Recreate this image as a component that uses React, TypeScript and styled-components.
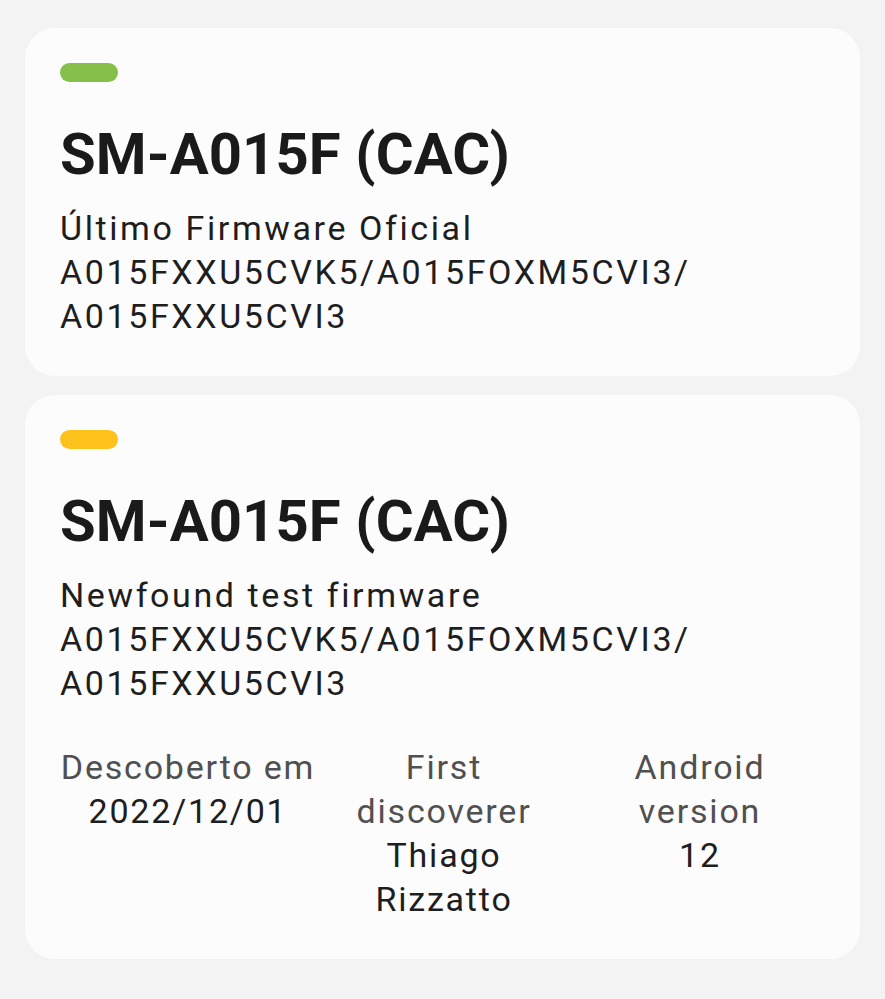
import React from 'react';
import styled, { createGlobalStyle } from 'styled-components';

const GlobalStyle = createGlobalStyle`
  html, body {
    margin: 0;
    padding: 0;
    background: #f3f3f3;
  }
  body {
    font-family: Roboto, "Noto Sans", sans-serif;
    color: #1c1c1c;
  }
`;

const Page = styled.div`
  display: flex;
  flex-direction: column;
  gap: 19px;
  padding: 28px 25px 39px 25px;
  box-sizing: border-box;
  width: 885px;
  min-height: 999px;
`;

const Card = styled.div`
  background: #fcfcfc;
  border-radius: 30px;
  padding: 35px 32px 38px 35px;
  display: flex;
  flex-direction: column;
`;

const Pill = styled.div<{ $color: string }>`
  width: 58px;
  height: 19px;
  border-radius: 10px;
  background: ${p => p.$color};
`;

const Title = styled.h2`
  margin: 38px 0 0 0;
  font-size: 58px;
  line-height: 68px;
  font-weight: 700;
  letter-spacing: 0.1px;
  color: #1a1a1a;
`;

const Body = styled.div`
  margin-top: 18px;
  font-size: 34px;
  line-height: 44px;
  letter-spacing: 2.6px;
  color: #1e1e1e;
`;

const Stats = styled.div`
  margin-top: 40px;
  display: grid;
  grid-template-columns: repeat(3, 256px);
`;

const Stat = styled.div`
  text-align: center;
  font-size: 34px;
  line-height: 44px;
  letter-spacing: 1.8px;
  white-space: nowrap;
`;

const StatLabel = styled.div`
  color: #505050;
`;

const StatValue = styled.div`
  color: #1e1e1e;
`;

export default function App() {
  return (
    <>
      <GlobalStyle />
      <Page>
        <Card>
          <Pill $color="#86c04a" />
          <Title>SM-A015F (CAC)</Title>
          <Body>
            Último Firmware Oficial<br />
            A015FXXU5CVK5/A015FOXM5CVI3/<br />
            A015FXXU5CVI3
          </Body>
        </Card>
        <Card>
          <Pill $color="#fcc21b" />
          <Title>SM-A015F (CAC)</Title>
          <Body>
            Newfound test firmware<br />
            A015FXXU5CVK5/A015FOXM5CVI3/<br />
            A015FXXU5CVI3
          </Body>
          <Stats>
            <Stat>
              <StatLabel>Descoberto em</StatLabel>
              <StatValue>2022/12/01</StatValue>
            </Stat>
            <Stat>
              <StatLabel>First<br />discoverer</StatLabel>
              <StatValue>Thiago<br />Rizzatto</StatValue>
            </Stat>
            <Stat>
              <StatLabel>Android<br />version</StatLabel>
              <StatValue>12</StatValue>
            </Stat>
          </Stats>
        </Card>
      </Page>
    </>
  );
}
